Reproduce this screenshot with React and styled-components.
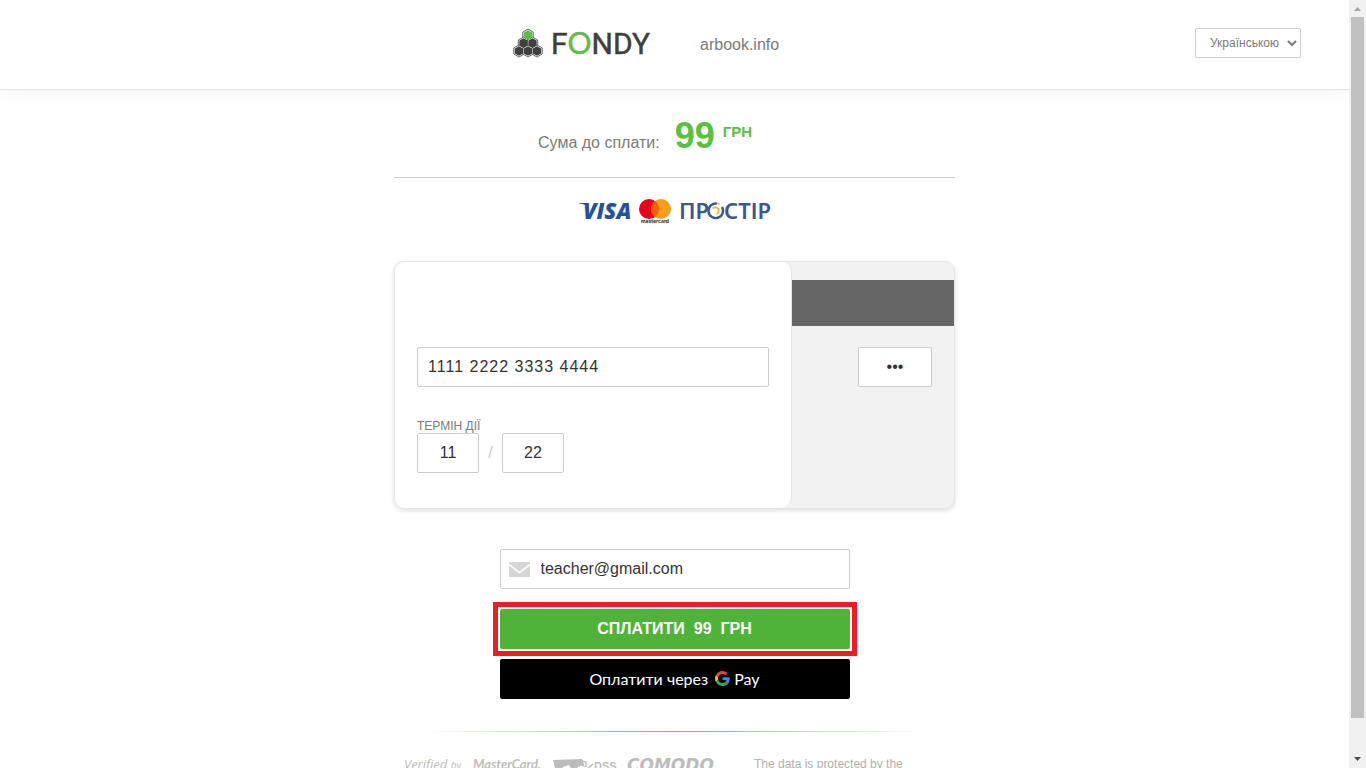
import { useState } from 'react';
import styled, { createGlobalStyle } from 'styled-components';

const HEXES = [
  { x: 16, y: 7, fill: '#58c140' },
  { x: 11.500, y: 15 },
  { x: 20.500, y: 15 },
  { x: 7, y: 23 },
  { x: 16, y: 23 },
  { x: 25, y: 23 },
];

const hexPoints = (x, y, r) => {
  const w = r * 0.87;
  return `${x},${y - r} ${x + w},${y - r / 2} ${x + w},${y + r / 2} ${x},${y + r} ${x - w},${y + r / 2} ${x - w},${y - r / 2}`;
};

const FondyLogo = () => (
  <svg width="142" height="34" viewBox="0 0 142 34" role="img" aria-label="Fondy">
    {HEXES.map(({ x, y }) => (
      <polygon key={`${x}-${y}`} points={hexPoints(x, y, 6)} fill="#fff" stroke="#3f3f3f" strokeWidth="0.8" />
    ))}
    {HEXES.map(({ x, y, fill }) => (
      <polygon key={`${x}-${y}`} points={hexPoints(x, y, 4.800)} fill={fill || '#3f3f3f'} />
    ))}
    <text x="39" y="26" fontFamily="Roboto, sans-serif" fontSize="30" fill="#3f3f3f" stroke="#3f3f3f" strokeWidth="0.5">
      F<tspan fontFamily="Lato, sans-serif" fill="#62bb46" stroke="#62bb46">O</tspan>NDY
    </text>
  </svg>
);

const VisaLogo = () => (
  <svg width="53" height="26" viewBox="0 0 53 26" role="img" aria-label="Visa">
    <path d="M1 4h8l1.500 3.500C7.500 5.500 4.500 4.600 1 4.400z" fill="#2450a4" />
    <text x="5" y="20" fontFamily="'Open Sans', sans-serif" fontSize="22" fontWeight="800" fontStyle="italic" fill="#2450a4">VISA</text>
  </svg>
);

const MastercardLogo = () => (
  <svg width="34" height="26" viewBox="0 0 34 26" role="img" aria-label="Mastercard">
    <circle cx="11" cy="10" r="10" fill="#eb001b" />
    <circle cx="23" cy="10" r="10" fill="#f79e1b" />
    <path d="M17 2a10 10 0 0 1 0 16a10 10 0 0 1 0-16z" fill="#ff5f00" />
    <text x="17" y="24" textAnchor="middle" fontFamily="Inter, sans-serif" fontSize="5" fontWeight="700" fill="#231f20">mastercard</text>
  </svg>
);

const ProstirLogo = () => (
  <svg width="94" height="26" viewBox="0 0 94 26" role="img" aria-label="Простір">
    <text x="0" y="20" fontFamily="'Noto Sans', sans-serif" fontSize="22" fontWeight="600" fill="#3d5591">ПР</text>
    <path d="M38 4.600A7.300 7.300 0 1 0 43 8" fill="none" stroke="#3d5591" strokeWidth="2.400" />
    <path d="M33.500 9.500a3.500 3.500 0 1 1 4 5.500M38 4l2.500 1.500" fill="none" stroke="#f5b82e" strokeWidth="2" />
    <text x="45" y="20" fontFamily="'Noto Sans', sans-serif" fontSize="22" fontWeight="600" fill="#3d5591">СТІР</text>
  </svg>
);

const GoogleIcon = () => (
  <svg width="15" height="15" viewBox="0 0 48 48" aria-hidden="true">
    <path fill="#EA4335" d="M24 9.500c3.540 0 6.710 1.220 9.210 3.600l6.850-6.850C35.900 2.380 30.470 0 24 0 14.620 0 6.510 5.380 2.560 13.220l7.980 6.190C12.430 13.720 17.740 9.500 24 9.500z" />
    <path fill="#4285F4" d="M46.980 24.550c0-1.570-.150-3.090-.380-4.550H24v9.020h12.940c-.580 2.960-2.260 5.480-4.780 7.180l7.730 6c4.510-4.180 7.090-10.360 7.090-17.650z" />
    <path fill="#FBBC05" d="M10.530 28.590c-.480-1.450-.760-2.990-.760-4.590s.270-3.140.760-4.590l-7.980-6.190C.920 16.460 0 20.120 0 24c0 3.880.920 7.540 2.560 10.780l7.970-6.190z" />
    <path fill="#34A853" d="M24 48c6.480 0 11.930-2.130 15.890-5.810l-7.730-6c-2.150 1.450-4.920 2.300-8.160 2.300-6.260 0-11.570-4.220-13.470-9.910l-7.980 6.190C6.510 42.620 14.620 48 24 48z" />
  </svg>
);

const MailIcon = () => (
  <svg width="21" height="15" viewBox="0 0 21 15" aria-hidden="true">
    <path d="M0 0h21v1.500L10.500 9.500 0 1.500z" fill="#d6d6d6" />
    <path d="M0 3.500l10.500 8 10.500-8V15H0z" fill="#d6d6d6" />
  </svg>
);

const SecurityLogos = () => (
  <svg width="311" height="24" viewBox="0 0 311 24" role="img" aria-label="Verified by Visa, MasterCard SecureCode, PCI DSS, Comodo">
    <g fill="#bcbcbc" fontFamily="'Open Sans', sans-serif">
      <text x="0" y="12" fontSize="13" fontStyle="italic">
        Verified <tspan fontSize="10">by</tspan>
      </text>
      <text x="69" y="12" fontSize="13" fontWeight="700" fontStyle="italic" fontFamily="Lato, sans-serif">MasterCard.</text>
      <path d="M149 3l29-1 3 8-6-2-3 5h-4l-3-5-6 2-2 5h-5z" />
      <path d="M175 10l3-6 4 1v5M183 12l6-5" fill="none" stroke="#bcbcbc" strokeWidth="1.500" />
      <text x="190" y="13" fontSize="11" fontWeight="700" fontFamily="'Liberation Sans', sans-serif">DSS</text>
      <text x="223" y="14" fontFamily="'DejaVu Sans', sans-serif" fontSize="17" fontWeight="700" fontStyle="italic">COMODO</text>
    </g>
  </svg>
);

const App = () => {
  const [lang, setLang] = useState('uk');
  const [card, setCard] = useState('1111 2222 3333 4444');
  const [month, setMonth] = useState('11');
  const [year, setYear] = useState('22');
  const [cvv, setCvv] = useState('123');
  const [email, setEmail] = useState('teacher@gmail.com');

  return (
    <>
      <GlobalStyle />
      <Window>
        <Page>
          <Header>
            <Brand>
              <FondyLogo />
              <Merchant>arbook.info</Merchant>
            </Brand>
            <LangSelect aria-label="Мова" value={lang} onChange={(e) => setLang(e.target.value)}>
              <option value="uk">Українською</option>
            </LangSelect>
          </Header>
          <Main>
            <Amount>
              <AmountLabel>Сума до сплати:</AmountLabel>
              <AmountValue>99</AmountValue>
              <Currency>ГРН</Currency>
            </Amount>
            <Systems>
              <VisaLogo />
              <MastercardLogo />
              <ProstirLogo />
            </Systems>
            <Form onSubmit={(e) => e.preventDefault()}>
              <Card>
                <CardFront>
                  <CardNumber aria-label="Номер картки" value={card} onChange={(e) => setCard(e.target.value)} />
                  <ExpiryLabel htmlFor="month">ТЕРМІН ДІЇ</ExpiryLabel>
                  <Expiry>
                    <ShortField id="month" value={month} onChange={(e) => setMonth(e.target.value)} />
                    <Slash>/</Slash>
                    <ShortField aria-label="Рік" value={year} onChange={(e) => setYear(e.target.value)} />
                  </Expiry>
                </CardFront>
                <CardBack>
                  <Stripe />
                  <Cvv type="password" aria-label="CVV" value={cvv} onChange={(e) => setCvv(e.target.value)} />
                </CardBack>
              </Card>
              <Actions>
                <EmailBox>
                  <MailIcon />
                  <EmailInput type="email" aria-label="Email" value={email} onChange={(e) => setEmail(e.target.value)} />
                </EmailBox>
                <Highlight>
                  <PayButton type="submit">
                    <span>СПЛАТИТИ</span>
                    <span>99</span>
                    <span>ГРН</span>
                  </PayButton>
                </Highlight>
                <GPayButton type="button">
                  <span>Оплатити через</span>
                  <GPayMark>
                    <GoogleIcon />
                    <span>Pay</span>
                  </GPayMark>
                </GPayButton>
              </Actions>
            </Form>
            <Divider />
            <Footer>
              <SecurityLogos />
              <FooterText>The data is protected by the</FooterText>
            </Footer>
          </Main>
        </Page>
        <Scrollbar aria-hidden="true">
          <ScrollArrow viewBox="0 0 17 17"><path d="M5 11h7L8.500 7z" fill="#a3a3a3" /></ScrollArrow>
          <Track><Thumb /></Track>
          <ScrollArrow viewBox="0 0 17 17"><path d="M5 6h7L8.500 10z" fill="#505050" /></ScrollArrow>
        </Scrollbar>
      </Window>
    </>
  );
};

export default App;

const GlobalStyle = createGlobalStyle`
* { box-sizing: border-box; }
body {
  margin: 0;
  background: #fff;
  color: #7a7a7a;
  font-family: 'Liberation Sans', Arial, sans-serif;
  font-size: 16px;
}
svg { flex: none; display: block; overflow: visible; }
`

const Window = styled.div`
  display: grid;
  grid-template-columns: 1fr 17px;
  height: 100vh;
  overflow: hidden;
`

const Page = styled.div`
  min-width: 0;
  overflow: hidden;
`

const Header = styled.header`
  display: grid;
  grid-template-columns: 1fr minmax(0, 561px) 1fr;
  height: 90px;
  border-bottom: 1px solid #e5e5e5;
  box-shadow: 0 0 20px rgba(0, 0, 0, 0.06);
`

const Brand = styled.div`
  grid-column: 2;
  display: flex;
  align-items: center;
  gap: 46px;
  padding: 0 0 0 118px;
`

const Merchant = styled.span`
  line-height: 20px;
`

const LangSelect = styled.select`
  justify-self: end;
  width: 106px;
  height: 30px;
  margin: 28px 48px 0 0;
  padding: 0 0 0 10px;
  border: 1px solid #ccc;
  border-radius: 2px;
  background: #fff;
  color: #7a7a7a;
  font-family: inherit;
  font-size: 12px;
`

const Main = styled.main`
  width: 100%;
  max-width: 561px;
  margin: 0 auto;
`

const Amount = styled.div`
  display: flex;
  align-items: baseline;
  height: 88px;
  padding: 25px 0 0 144px;
  border-bottom: 1px solid #ccc;
`

const AmountLabel = styled.span`
  margin-right: 15px;
`

const AmountValue = styled.strong`
  color: #58c140;
  font-size: 36px;
`

const Currency = styled.strong`
  align-self: flex-start;
  margin-left: 8px;
  padding-top: 9px;
  color: #58c140;
  font-size: 15px;
  line-height: 16px;
`

const Systems = styled.div`
  display: flex;
  justify-content: center;
  gap: 7px;
  padding: 21px 0 36px 2px;
`

const Form = styled.form`
  margin: 0;
`

const Card = styled.div`
  display: flex;
  height: 248px;
  border: 1px solid #e5e5e5;
  border-radius: 10px;
  background: #f2f2f2;
  box-shadow: 0 2px 5px rgba(0, 0, 0, 0.12);
  overflow: hidden;
`

const CardFront = styled.div`
  flex: 1;
  min-width: 0;
  padding: 85px 22px 0;
  border-right: 1px solid #e5e5e5;
  border-radius: 0 10px 10px 0;
  background: #fff;
`

const CardBack = styled.div`
  width: 162px;
  padding-top: 18px;
`

const Stripe = styled.div`
  height: 46px;
  margin-bottom: 21px;
  background: #666;
`

const Field = styled.input`
  display: block;
  height: 40px;
  padding: 0 10px;
  border: 1px solid #ccc;
  border-radius: 2px;
  background: #fff;
  color: #333;
  font-family: inherit;
  font-size: 16px;
  outline: none;
`

const CardNumber = styled(Field)`
  width: 100%;
  letter-spacing: 1px;
`

const ShortField = styled(Field)`
  width: 62px;
  text-align: center;
`

const Cvv = styled(Field)`
  width: 74px;
  margin: 0 22px 0 auto;
  text-align: center;
`

const ExpiryLabel = styled.label`
  display: block;
  margin-top: 32px;
  font-size: 12px;
  line-height: 14px;
`

const Expiry = styled.div`
  display: flex;
  align-items: center;
`

const Slash = styled.span`
  width: 23px;
  color: #ccc;
  text-align: center;
`

const Actions = styled.div`
  display: flex;
  flex-direction: column;
  align-items: center;
  padding-top: 40px;
`

const EmailBox = styled.div`
  display: flex;
  align-items: center;
  gap: 11px;
  width: 350px;
  height: 40px;
  padding: 0 8px;
  border: 1px solid #ccc;
  border-radius: 2px;
`

const EmailInput = styled.input`
  flex: 1;
  min-width: 0;
  padding: 0;
  border: 0;
  outline: none;
  background: none;
  color: #333;
  font-family: inherit;
  font-size: 16px;
`

const Highlight = styled.div`
  width: 364px;
  margin: 13px 0 3px;
  padding: 2px;
  border: 5px solid #ee1c25;
`

const Button = styled.button`
  display: flex;
  align-items: center;
  justify-content: center;
  height: 40px;
  padding: 0;
  border: 0;
  border-radius: 2px;
  color: #fff;
  font-size: 16px;
  cursor: pointer;
`

const PayButton = styled(Button)`
  gap: 9px;
  width: 100%;
  background: #4fb239;
  font-family: inherit;
  font-weight: 700;
`

const GPayButton = styled(Button)`
  gap: 7px;
  width: 350px;
  padding-bottom: 2px;
  background: #000;
  font-family: Lato, 'Open Sans', sans-serif;
`

const GPayMark = styled.span`
  display: flex;
  align-items: center;
  gap: 4px;
`

const Divider = styled.div`
  height: 1px;
  margin: 32px 30px 25px;
  background: linear-gradient(to right, transparent, #7fb86c, transparent);
`

const Footer = styled.footer`
  display: flex;
  gap: 39px;
  padding-left: 10px;
`

const FooterText = styled.p`
  margin: 0;
  color: #b0b0b0;
  font-size: 12px;
  line-height: 14px;
`

const Scrollbar = styled.div`
  display: flex;
  flex-direction: column;
  background: #f1f1f1;
`

const ScrollArrow = styled.svg`
  width: 17px;
  height: 17px;
`

const Track = styled.div`
  flex: 1;
  display: grid;
  grid-template-rows: 21fr 1fr;
  padding: 0 2px;
`

const Thumb = styled.div`
  background: #c1c1c1;
`
